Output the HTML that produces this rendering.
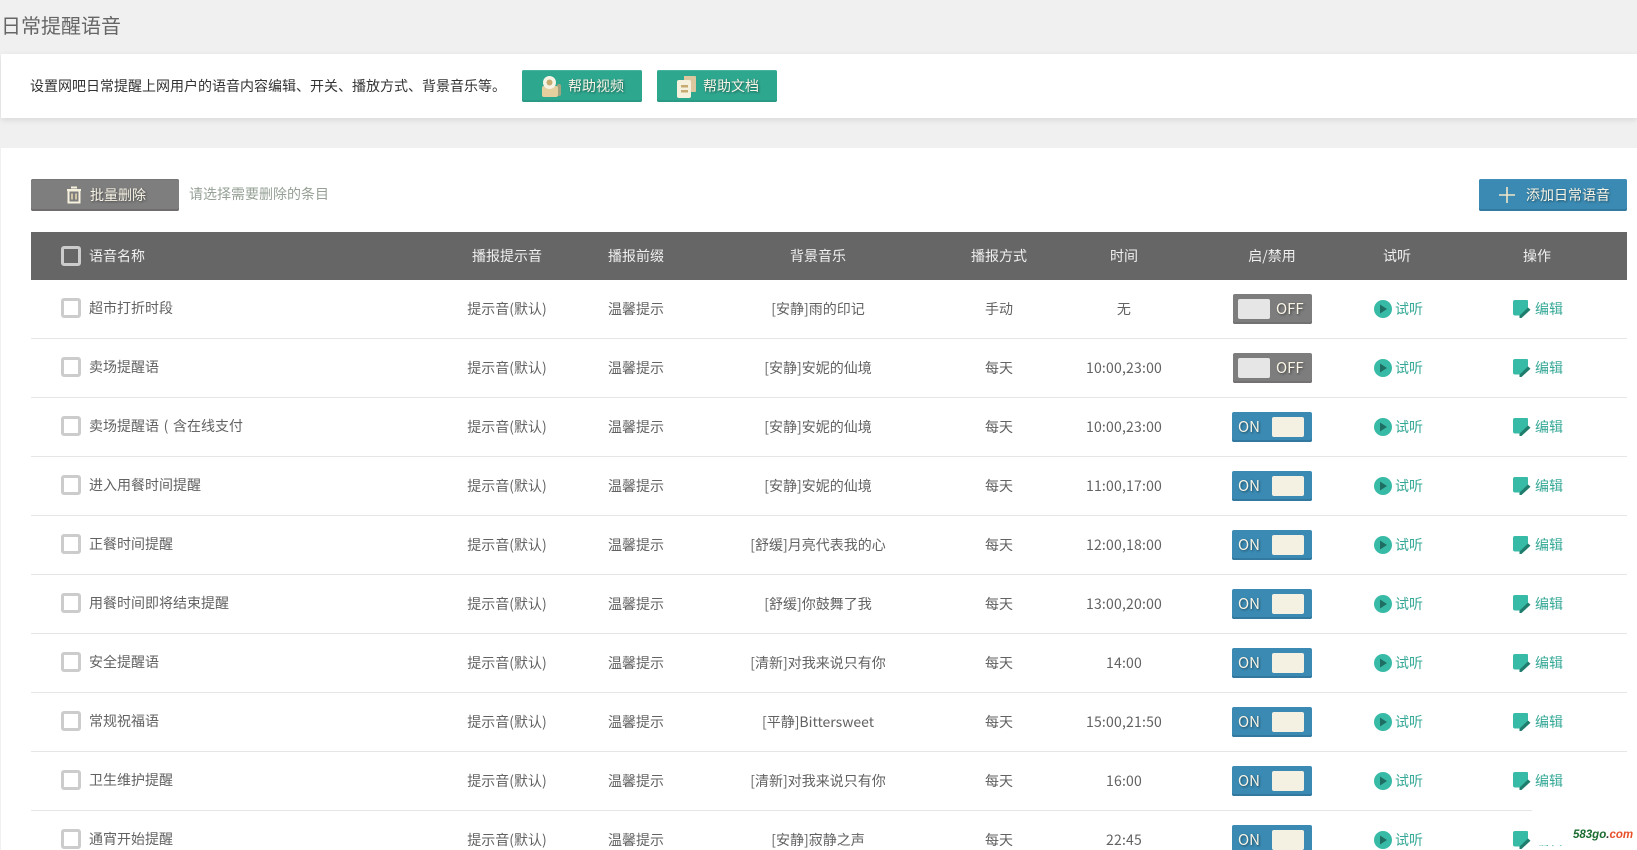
<!DOCTYPE html>
<html lang="zh-CN"><head><meta charset="utf-8"><title>日常提醒语音</title>
<style>
*{box-sizing:border-box;margin:0;padding:0}
html,body{width:1637px;height:850px;overflow:hidden;background:#f0f0f0}
body{position:relative;font:14px/20px "Noto Sans CJK SC","WenQuanYi Zen Hei","Liberation Sans",sans-serif;color:#626262}
.a{position:absolute;white-space:nowrap}
.band{position:absolute;left:1px;width:1636px;background:#fff}
.btn{position:absolute;border-radius:2px;color:#f8f4e6;height:32px;line-height:30px;text-shadow:1px 1px 2px rgba(0,0,0,.45)}
.teal{background:#2ea78f;box-shadow:inset 0 -2px 0 #2a9a85,inset 0 1px 0 #45b39e}
.gray{background:#7e7e7e;box-shadow:inset 0 -2px 0 #716d6e,inset 0 1px 0 #767676}
.blue{background:#3a8ab3;box-shadow:inset 0 -2px 0 #33799f,inset 0 1px 0 #3f8fb8}
.head{position:absolute;left:31px;top:232px;width:1596px;height:48px;background:#666}
.hc{position:absolute;top:234px;line-height:44px;color:#f0f0f0;text-align:center;width:160px;white-space:nowrap}
.r{position:absolute;left:31px;width:1596px;height:59px;border-bottom:1px solid #e6e6e6}
.r span,.r i,.r svg,.r b{position:absolute}
.r span{white-space:nowrap;font-style:normal;font-weight:normal}
.r em{display:inline-block;width:14px;text-align:center;font-style:normal}
.cb{display:block;left:30px;top:18px;width:20px;height:20px;border:3px solid #ccc;border-radius:3px;background:#fff}
.n{left:58px;top:18px}
.c{top:19px;width:160px;text-align:center}
.c1{left:396px}.c2{left:525px}.c3{left:707px}.c4{left:888px}.c5{left:1013px;letter-spacing:.2px}
.tg{display:block;top:14px;height:30px;border-radius:2px}
.off{left:1202px;width:79px;background:#7d7d7d;box-shadow:inset 0 -2px 0 #737172}
.on{left:1201px;width:80px;background:#3a8ab3;box-shadow:inset 0 -2px 0 #33799f}
.kb{display:block;top:5px;width:32px;height:20px;border-radius:2px}
.off .kb{left:5px;background:#e6e6e6}
.on .kb{left:40px;background:#f4f0e2}
.tt{top:4px;line-height:22px;font-size:15px;color:#f8f4e6;text-shadow:1px 1px 2px rgba(0,0,0,.45)}
.off .tt{left:43px}.on .tt{left:6px}
.pl{left:1343px;top:20px}
.pt{left:1364px;top:19px;color:#35a896}
.ed{left:1482px;top:20px}
.et{left:1504px;top:19px;color:#35a896}
</style></head><body>
<svg width="0" height="0" style="position:absolute"><defs>
<symbol id="play" viewBox="0 0 18 18"><circle cx="9" cy="9" r="9" fill="#38bba6"/><path d="M6 4.500 L13 9 L6 13.500Z" fill="#1f6e63"/></symbol>
<symbol id="edit" viewBox="0 0 18 18"><path d="M2 0H14Q15 0 15 1V8.500L7 15.500H2Q0 15.500 0 13.500V2Q0 0 2 0Z" fill="#38bba6"/><path d="M6.500 15.500L15 7.500L17.500 9.800L8.500 18H6.500Z" fill="#1f7d6d"/></symbol>
</defs></svg>

<div class="a" style="left:1px;top:11px;font-size:20px;line-height:28px;color:#666">日常提醒语音</div>

<div class="band" style="top:54px;height:64px;box-shadow:0 2px 6px rgba(0,0,0,.1)"></div>
<div class="a" style="left:30px;top:76px;color:#333">设置网吧日常提醒上网用户的语音内容编辑、开关、播放方式、背景音乐等。</div>

<div class="btn teal" style="left:522px;top:70px;width:120px"><span class="a" style="left:46px;top:1px">帮助视频</span>
<svg class="a" style="left:18px;top:5px" width="24" height="24" viewBox="0 0 24 24"><rect x="17" y="9" width="4" height="12" rx="2" fill="#a3a47f"/><path d="M2 13Q2 11 4 11H16Q18 11 18 13V20Q18 22 16 22H4Q2 22 2 20Z" fill="#e6cf9f"/><circle cx="9.500" cy="7.500" r="6.500" fill="#f7f3e4"/><circle cx="9.500" cy="7.500" r="3" fill="#c7ab73"/></svg></div>

<div class="btn teal" style="left:657px;top:70px;width:120px"><span class="a" style="left:46px;top:1px">帮助文档</span>
<svg class="a" style="left:18px;top:5px" width="24" height="24" viewBox="0 0 24 24"><path d="M9 1H20Q21 1 21 2V16Q21 17 20 17H9Z" fill="#dcc79e"/><rect x="2" y="5" width="14" height="18" rx="2" fill="#f6f1dd"/><rect x="6" y="10" width="7" height="2.500" fill="#c7ab73"/><rect x="6" y="15" width="7" height="2.500" fill="#c7ab73"/></svg></div>

<div class="band" style="top:148px;height:702px"></div>

<div class="btn gray" style="left:31px;top:179px;width:148px"><span class="a" style="left:59px;top:1px">批量删除</span>
<svg class="a" style="left:34px;top:7px" width="18" height="18" viewBox="0 0 18 18"><path d="M6 1.500H12M2 4H16" stroke="#f6f1dd" stroke-width="2" fill="none"/><path d="M3.500 4.500H14.500V16.500H3.500Z" fill="none" stroke="#f6f1dd" stroke-width="2"/><path d="M7 7.500V13.500M11 7.500V13.500" stroke="#cfc5a5" stroke-width="2"/></svg></div>
<div class="a" style="left:189px;top:184px;color:#96a096">请选择需要删除的条目</div>

<div class="btn blue" style="left:1479px;top:179px;width:148px"><span class="a" style="left:47px;top:1px">添加日常语音</span>
<svg class="a" style="left:20px;top:8px" width="16" height="16" viewBox="0 0 16 16"><path d="M8 0V16M0 8H16" stroke="#f0e6c8" stroke-width="1.600"/></svg></div>

<div class="head"></div>
<div class="a" style="left:61px;top:246px;width:20px;height:20px;border:3px solid #ccc;border-radius:3px"></div>
<div class="a" style="left:89px;top:246px;color:#f0f0f0">语音名称</div>
<div class="hc" style="left:427px">播报提示音</div>
<div class="hc" style="left:556px">播报前缀</div>
<div class="hc" style="left:738px">背景音乐</div>
<div class="hc" style="left:919px">播报方式</div>
<div class="hc" style="left:1044px">时间</div>
<div class="hc" style="left:1192px">启/禁用</div>
<div class="hc" style="left:1317px">试听</div>
<div class="hc" style="left:1457px">操作</div>

<div class="r" style="top:280px"><b class="cb"></b><span class="n">超市打折时段</span><span class="c c1">提示音(默认)</span><span class="c c2">温馨提示</span><span class="c c3">[安静]雨的印记</span><span class="c c4">手动</span><span class="c c5">无</span><b class="tg off"><b class="kb"></b><span class="tt">OFF</span></b><svg class="pl" width="18" height="18"><use href="#play"/></svg><span class="pt">试听</span><svg class="ed" width="18" height="18"><use href="#edit"/></svg><span class="et">编辑</span></div>

<div class="r" style="top:339px"><b class="cb"></b><span class="n">卖场提醒语</span><span class="c c1">提示音(默认)</span><span class="c c2">温馨提示</span><span class="c c3">[安静]安妮的仙境</span><span class="c c4">每天</span><span class="c c5">10:00,23:00</span><b class="tg off"><b class="kb"></b><span class="tt">OFF</span></b><svg class="pl" width="18" height="18"><use href="#play"/></svg><span class="pt">试听</span><svg class="ed" width="18" height="18"><use href="#edit"/></svg><span class="et">编辑</span></div>

<div class="r" style="top:398px"><b class="cb"></b><span class="n">卖场提醒语<em>(</em>含在线支付</span><span class="c c1">提示音(默认)</span><span class="c c2">温馨提示</span><span class="c c3">[安静]安妮的仙境</span><span class="c c4">每天</span><span class="c c5">10:00,23:00</span><b class="tg on"><span class="tt">ON</span><b class="kb"></b></b><svg class="pl" width="18" height="18"><use href="#play"/></svg><span class="pt">试听</span><svg class="ed" width="18" height="18"><use href="#edit"/></svg><span class="et">编辑</span></div>

<div class="r" style="top:457px"><b class="cb"></b><span class="n">进入用餐时间提醒</span><span class="c c1">提示音(默认)</span><span class="c c2">温馨提示</span><span class="c c3">[安静]安妮的仙境</span><span class="c c4">每天</span><span class="c c5">11:00,17:00</span><b class="tg on"><span class="tt">ON</span><b class="kb"></b></b><svg class="pl" width="18" height="18"><use href="#play"/></svg><span class="pt">试听</span><svg class="ed" width="18" height="18"><use href="#edit"/></svg><span class="et">编辑</span></div>

<div class="r" style="top:516px"><b class="cb"></b><span class="n">正餐时间提醒</span><span class="c c1">提示音(默认)</span><span class="c c2">温馨提示</span><span class="c c3">[舒缓]月亮代表我的心</span><span class="c c4">每天</span><span class="c c5">12:00,18:00</span><b class="tg on"><span class="tt">ON</span><b class="kb"></b></b><svg class="pl" width="18" height="18"><use href="#play"/></svg><span class="pt">试听</span><svg class="ed" width="18" height="18"><use href="#edit"/></svg><span class="et">编辑</span></div>

<div class="r" style="top:575px"><b class="cb"></b><span class="n">用餐时间即将结束提醒</span><span class="c c1">提示音(默认)</span><span class="c c2">温馨提示</span><span class="c c3">[舒缓]你鼓舞了我</span><span class="c c4">每天</span><span class="c c5">13:00,20:00</span><b class="tg on"><span class="tt">ON</span><b class="kb"></b></b><svg class="pl" width="18" height="18"><use href="#play"/></svg><span class="pt">试听</span><svg class="ed" width="18" height="18"><use href="#edit"/></svg><span class="et">编辑</span></div>

<div class="r" style="top:634px"><b class="cb"></b><span class="n">安全提醒语</span><span class="c c1">提示音(默认)</span><span class="c c2">温馨提示</span><span class="c c3">[清新]对我来说只有你</span><span class="c c4">每天</span><span class="c c5">14:00</span><b class="tg on"><span class="tt">ON</span><b class="kb"></b></b><svg class="pl" width="18" height="18"><use href="#play"/></svg><span class="pt">试听</span><svg class="ed" width="18" height="18"><use href="#edit"/></svg><span class="et">编辑</span></div>

<div class="r" style="top:693px"><b class="cb"></b><span class="n">常规祝福语</span><span class="c c1">提示音(默认)</span><span class="c c2">温馨提示</span><span class="c c3">[平静]Bittersweet</span><span class="c c4">每天</span><span class="c c5">15:00,21:50</span><b class="tg on"><span class="tt">ON</span><b class="kb"></b></b><svg class="pl" width="18" height="18"><use href="#play"/></svg><span class="pt">试听</span><svg class="ed" width="18" height="18"><use href="#edit"/></svg><span class="et">编辑</span></div>

<div class="r" style="top:752px"><b class="cb"></b><span class="n">卫生维护提醒</span><span class="c c1">提示音(默认)</span><span class="c c2">温馨提示</span><span class="c c3">[清新]对我来说只有你</span><span class="c c4">每天</span><span class="c c5">16:00</span><b class="tg on"><span class="tt">ON</span><b class="kb"></b></b><svg class="pl" width="18" height="18"><use href="#play"/></svg><span class="pt">试听</span><svg class="ed" width="18" height="18"><use href="#edit"/></svg><span class="et">编辑</span></div>

<div class="r" style="top:811px;border:0"><b class="cb"></b><span class="n">通宵开始提醒</span><span class="c c1">提示音(默认)</span><span class="c c2">温馨提示</span><span class="c c3">[安静]寂静之声</span><span class="c c4">每天</span><span class="c c5">22:45</span><b class="tg on"><span class="tt">ON</span><b class="kb"></b></b><svg class="pl" width="18" height="18"><use href="#play"/></svg><span class="pt">试听</span><svg class="ed" width="18" height="18"><use href="#edit"/></svg><span class="et">编辑</span></div>

<div class="a" style="left:1532px;top:809px;width:105px;height:36px;background:#fff"></div>
<div class="a" style="left:1573px;top:826px;font:italic bold 11.500px/18px 'Liberation Sans',sans-serif;color:#1a6b2f">583go<span style="color:#333">.</span><span style="color:#e8502a">com</span></div>
</body></html>
